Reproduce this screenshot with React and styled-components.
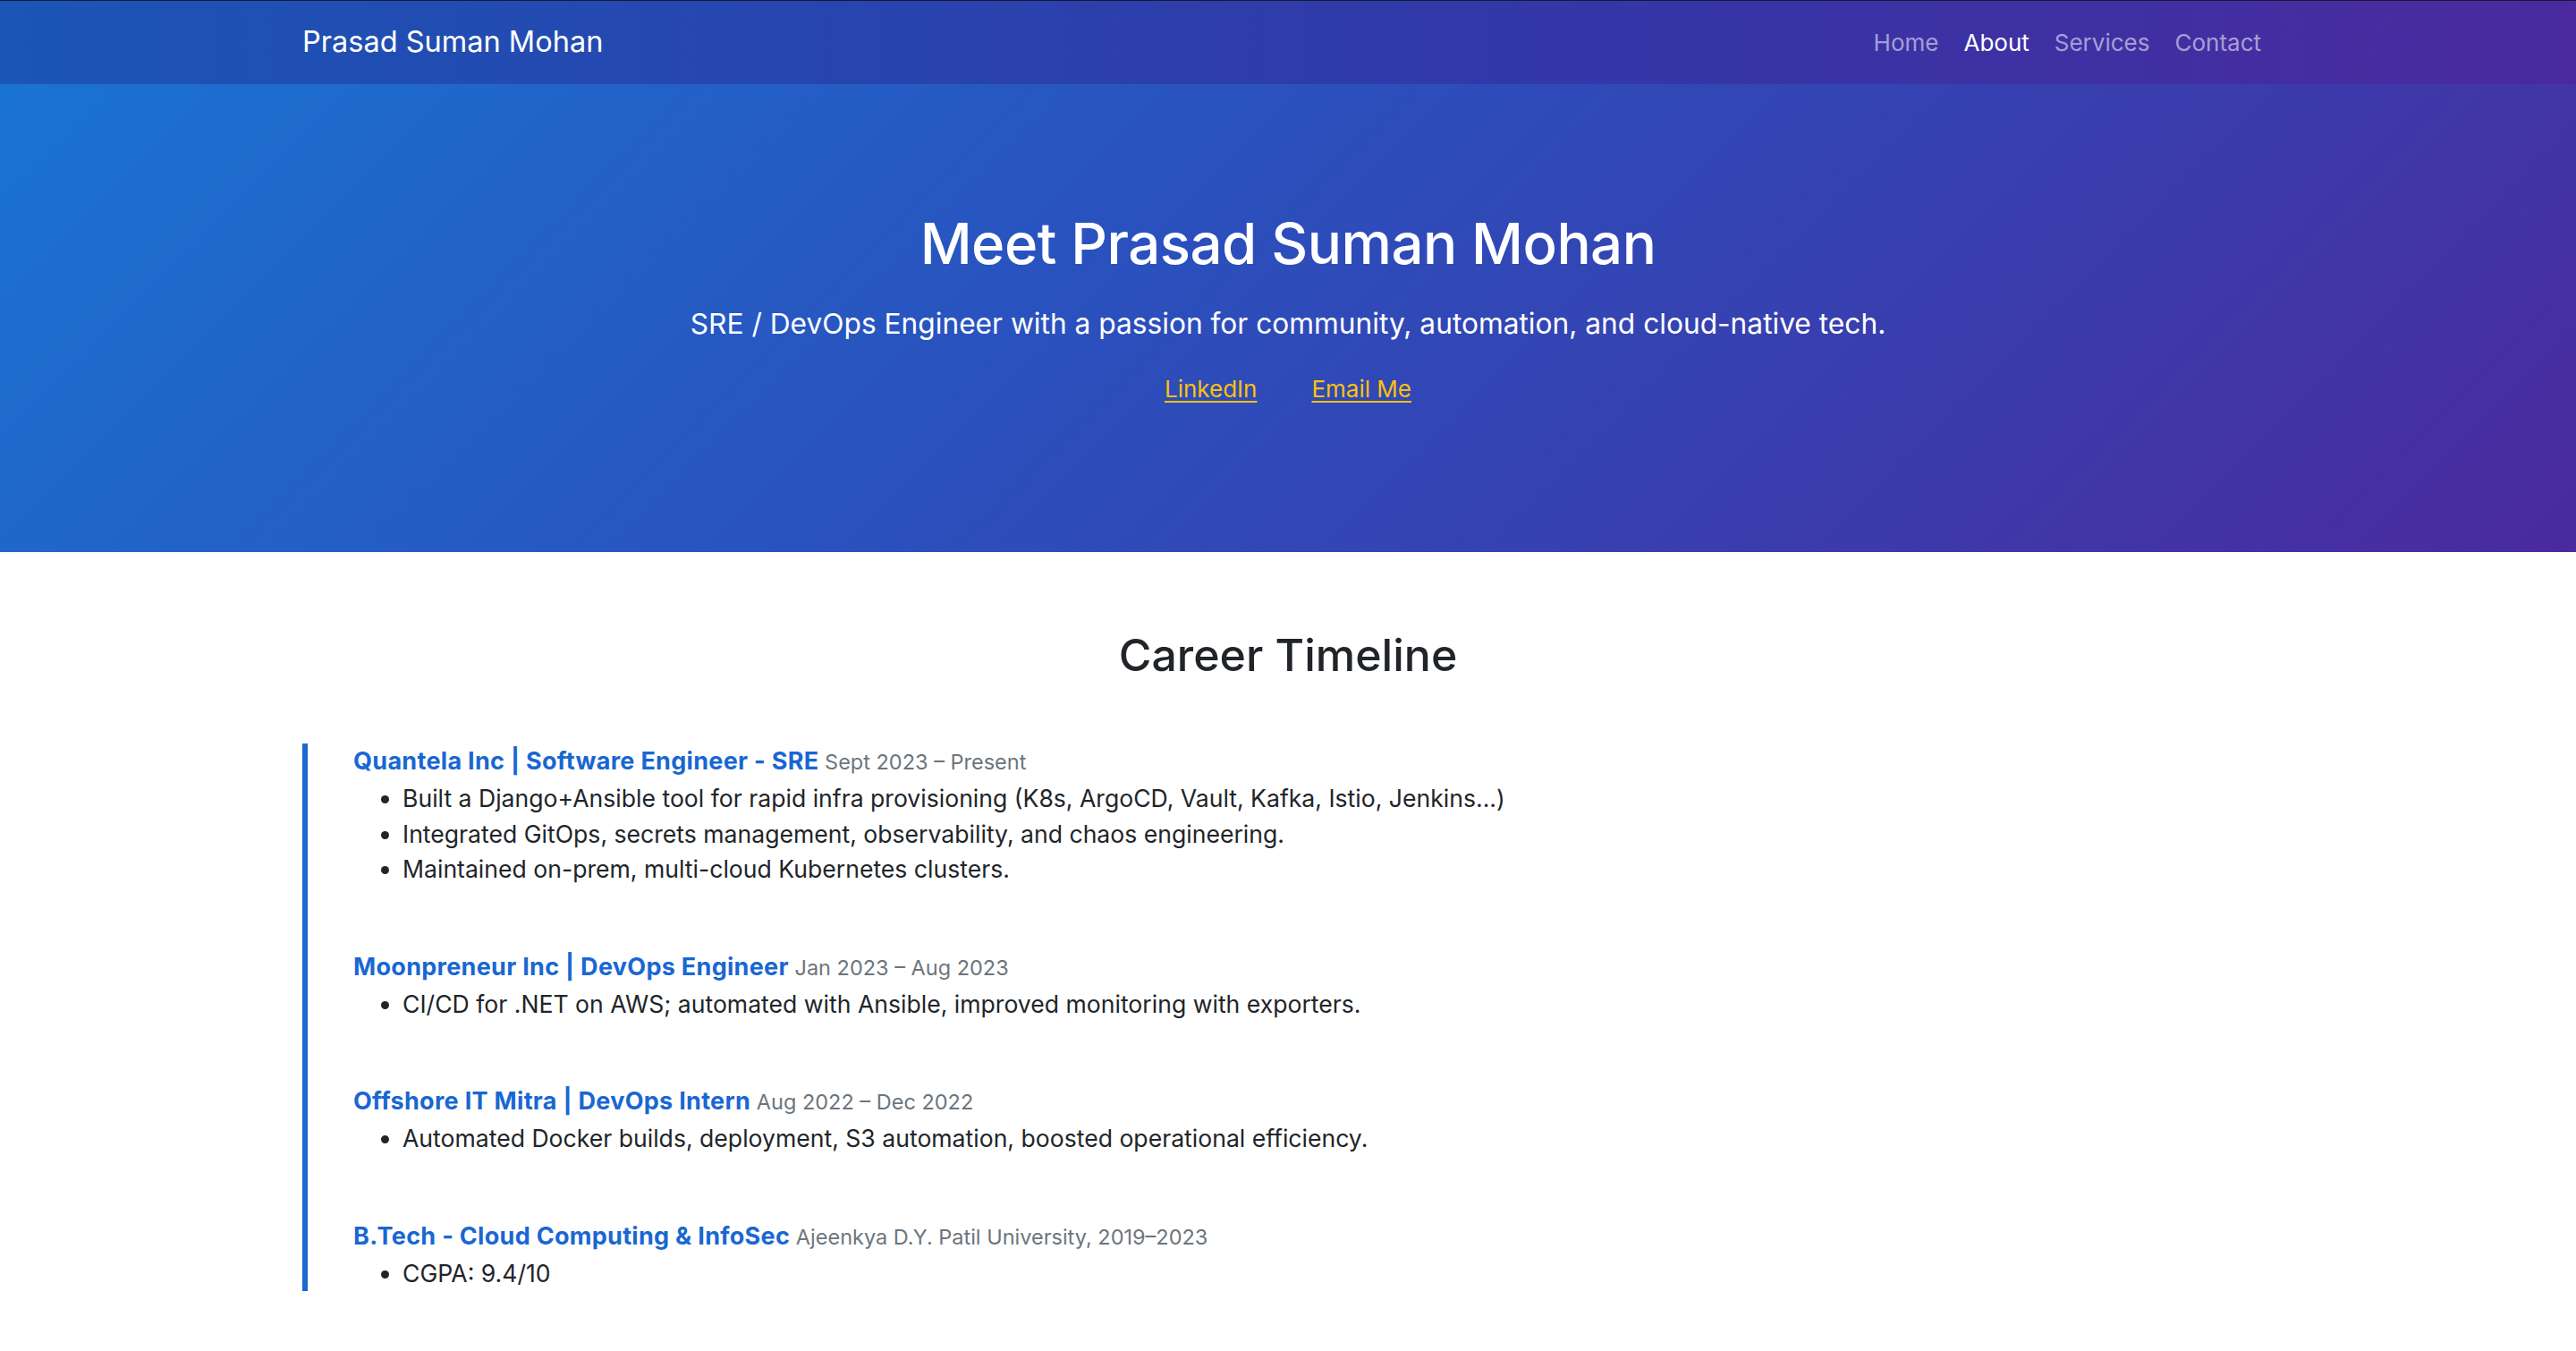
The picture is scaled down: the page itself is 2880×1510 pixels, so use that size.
import React from "react";
import styled, { createGlobalStyle } from "styled-components";

const GlobalStyle = createGlobalStyle`
  html, body {
    margin: 0;
    padding: 0;
    background: #fff;
    font-family: Inter, "Noto Sans", "Liberation Sans", sans-serif;
    color: #212529;
  }
  * { box-sizing: border-box; }
`;

const Navbar = styled.nav`
  height: 94px;
  border-top: 1px solid #161a2e;
  background: linear-gradient(90deg, #1b55b6 0%, #3337a8 60%, #4a2a9e 100%);
  display: flex;
  align-items: center;
`;

const Container = styled.div`
  width: 100%;
  max-width: 2204px;
  margin: 0 auto;
  display: ${(p) => (p.flex ? "flex" : "block")};
  align-items: center;
  justify-content: space-between;
`;

const Brand = styled.a`
  font-size: 32.5px;
  color: #fff;
  text-decoration: none;
  line-height: 1;
`;

const NavList = styled.div`
  display: flex;
`;

const NavLink = styled.a`
  font-size: 26px;
  padding: 0 14px;
  text-decoration: none;
  color: ${(p) => (p.active ? "#fff" : "rgba(255,255,255,0.55)")};
`;

const Hero = styled.header`
  height: 523px;
  background: linear-gradient(135deg, #1a73d3 0%, #2b4fbc 45%, #4a2a9e 100%);
  color: #fff;
  text-align: center;
  padding-top: 139px;
`;

const HeroTitle = styled.h1`
  margin: 0;
  font-size: 63.5px;
  font-weight: 500;
  line-height: 78px;
  letter-spacing: -0.5px;
`;

const Lead = styled.p`
  margin: 27px 0 0;
  font-size: 31.7px;
  font-weight: 400;
  line-height: 48px;
`;

const LinkRow = styled.div`
  margin-top: 29px;
  display: flex;
  justify-content: center;
  gap: 61px;
`;

const HeroLink = styled.a`
  font-size: 26px;
  line-height: 39px;
  color: #ffc107;
  text-decoration: underline;
  text-underline-offset: 4px;
`;

const Section = styled.section`
  padding-top: 85px;
`;

const SectionTitle = styled.h2`
  margin: 0 0 68px;
  text-align: center;
  font-size: 50px;
  font-weight: 500;
  line-height: 61px;
  color: #212529;
`;

const Timeline = styled.div`
  border-left: 6px solid #1a68d1;
  padding-left: 51px;
`;

const Item = styled.div`
  margin-bottom: 69px;
  &:last-child { margin-bottom: 0; }
`;

const ItemTitle = styled.div`
  font-size: 27px;
  line-height: 40px;
  font-weight: 700;
  color: #1967d2;
  letter-spacing: 0.3px;
`;

const When = styled.span`
  font-size: 23.5px;
  font-weight: 400;
  color: #6c757d;
  letter-spacing: 0;
`;

const Bullets = styled.ul`
  margin: 1px 0 0;
  padding-left: 55px;
`;

const Bullet = styled.li`
  font-size: 26.6px;
  line-height: 39.5px;
  color: #212529;
`;

const career = [
  {
    title: "Quantela Inc | Software Engineer - SRE",
    when: "Sept 2023 – Present",
    points: [
      "Built a Django+Ansible tool for rapid infra provisioning (K8s, ArgoCD, Vault, Kafka, Istio, Jenkins...)",
      "Integrated GitOps, secrets management, observability, and chaos engineering.",
      "Maintained on-prem, multi-cloud Kubernetes clusters.",
    ],
  },
  {
    title: "Moonpreneur Inc | DevOps Engineer",
    when: "Jan 2023 – Aug 2023",
    points: ["CI/CD for .NET on AWS; automated with Ansible, improved monitoring with exporters."],
  },
  {
    title: "Offshore IT Mitra | DevOps Intern",
    when: "Aug 2022 – Dec 2022",
    points: ["Automated Docker builds, deployment, S3 automation, boosted operational efficiency."],
  },
  {
    title: "B.Tech - Cloud Computing & InfoSec",
    when: "Ajeenkya D.Y. Patil University, 2019–2023",
    points: ["CGPA: 9.4/10"],
  },
];

const App = () => {
  return (
    <>
      <GlobalStyle />
      <Navbar>
        <Container flex>
          <Brand href="#">Prasad Suman Mohan</Brand>
          <NavList>
            <NavLink href="#">Home</NavLink>
            <NavLink href="#" active>About</NavLink>
            <NavLink href="#">Services</NavLink>
            <NavLink href="#">Contact</NavLink>
          </NavList>
        </Container>
      </Navbar>

      <Hero>
        <HeroTitle>Meet Prasad Suman Mohan</HeroTitle>
        <Lead>SRE / DevOps Engineer with a passion for community, automation, and cloud-native tech.</Lead>
        <LinkRow>
          <HeroLink href="#">LinkedIn</HeroLink>
          <HeroLink href="#">Email Me</HeroLink>
        </LinkRow>
      </Hero>

      <Section>
        <Container>
          <SectionTitle>Career Timeline</SectionTitle>
          <Timeline>
            {career.map((job) => (
              <Item key={job.title}>
                <ItemTitle>
                  {job.title} <When>{job.when}</When>
                </ItemTitle>
                <Bullets>
                  {job.points.map((pt) => (
                    <Bullet key={pt}>{pt}</Bullet>
                  ))}
                </Bullets>
              </Item>
            ))}
          </Timeline>
        </Container>
      </Section>
    </>
  );
};

export default App;
